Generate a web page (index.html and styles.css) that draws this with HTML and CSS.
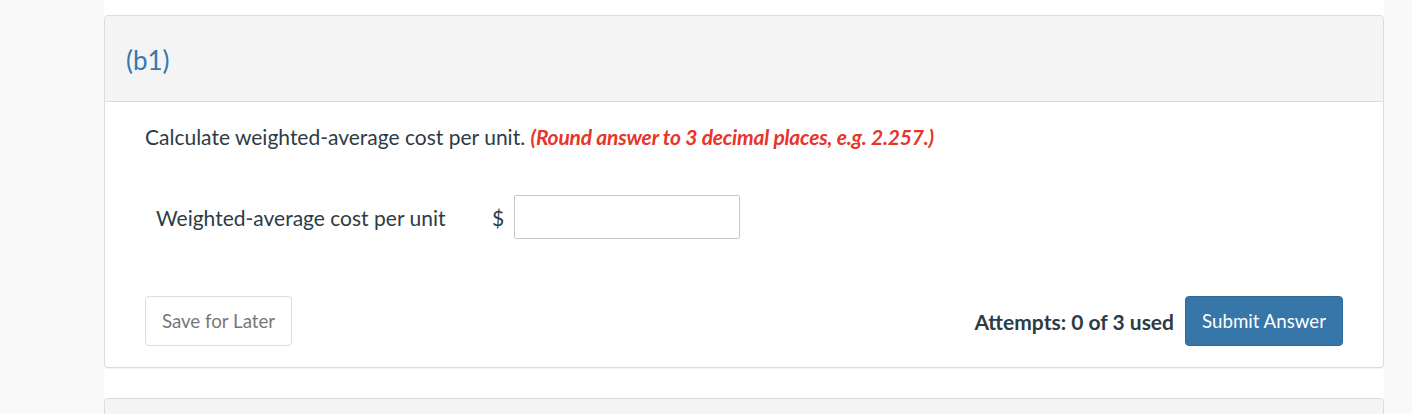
FILE: index.html
```html
<!DOCTYPE html>
<html>
<head>
<meta charset="utf-8">
<link rel="stylesheet" href="styles.css">
</head>
<body>
<div class="page">
  <main class="column">
    <section class="card">
      <header class="card-head">(b1)</header>
      <div class="card-body">
        <p class="question">Calculate weighted-average cost per unit. <em class="hint">(Round answer to 3 decimal places, e.g. 2.257.)</em></p>
        <div class="answer-row">
          <span class="answer-label">Weighted-average cost per unit</span>
          <span class="currency">$</span>
          <input class="answer-input" type="text">
        </div>
        <div class="actions">
          <button class="btn btn-save">Save for Later</button>
          <div class="actions-right">
            <span class="attempts">Attempts: 0 of 3 used</span>
            <button class="btn btn-submit">Submit Answer</button>
          </div>
        </div>
      </div>
    </section>
    <section class="card card-next">
      <header class="card-head"></header>
    </section>
  </main>
</div>
</body>
</html>
```
FILE: styles.css
```css
* { box-sizing: border-box; }
html, body { margin: 0; padding: 0; }
body {
  background: #f9f9f9;
  font-family: Lato, "Liberation Sans", sans-serif;
  color: #2d3b45;
}
.page {
  display: flex;
  padding-left: 104px;
  height: 414px;
  overflow: hidden;
}
.column {
  width: 1280px;
  background: #fff;
  padding-top: 15px;
  display: flex;
  flex-direction: column;
  gap: 30px;
}
.card {
  border: 1px solid #dcdcdc;
  border-radius: 4px;
  background: #fff;
  box-shadow: 0 1px 1px rgba(0,0,0,0.05);
}
.card-head {
  background: #f4f4f4;
  height: 86px;
  border-bottom: 1px solid #dcdcdc;
  border-radius: 4px 4px 0 0;
  padding: 29px 0 0 21px;
  font-size: 26px;
  color: #3278b1;
  line-height: 30px;
}
.card-body {
  padding: 20px 40px 21px 40px;
}
.question {
  margin: 0;
  font-size: 21px;
  line-height: 30px;
}
.hint {
  color: #e8342a;
  font-weight: 700;
  font-style: italic;
  letter-spacing: -0.2px;
}
.answer-row {
  display: flex;
  align-items: center;
  margin-top: 43px;
  padding-left: 11px;
}
.answer-label {
  font-size: 21px;
  width: 336px;
}
.currency {
  font-size: 21px;
  width: 22px;
}
.answer-input {
  width: 226px;
  height: 44px;
  border: 1px solid #c8c8c8;
  border-radius: 2px;
  font-size: 16px;
}
.actions {
  display: flex;
  justify-content: space-between;
  align-items: center;
  margin-top: 57px;
}
.actions-right {
  display: flex;
  align-items: center;
  gap: 11px;
}
.btn {
  font-family: Lato, "Liberation Sans", sans-serif;
  font-size: 18.7px;
  height: 50px;
  border-radius: 4px;
  padding: 0;
}
.btn-save {
  background: #fff;
  border: 1px solid #dcdcdc;
  color: #777;
  width: 147px;
}
.attempts {
  font-size: 21px;
  font-weight: 700;
  color: #2d3b45;
}
.btn-submit {
  background: #3676a8;
  border: 1px solid #2e6a99;
  color: #fff;
  width: 158px;
}
.card-next {
  height: 60px;
  border-bottom: none;
}
.card-next .card-head {
  height: 60px;
  border-bottom: none;
}
```
